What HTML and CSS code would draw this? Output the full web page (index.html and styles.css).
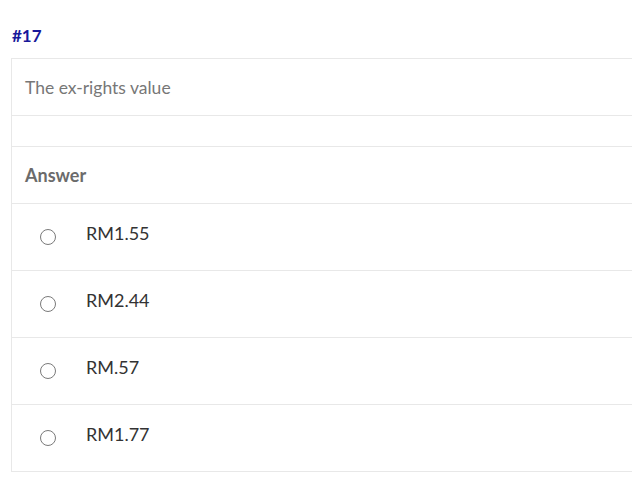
FILE: index.html
```html
<!DOCTYPE html>
<html>
<head>
<meta charset="utf-8">
<link rel="stylesheet" href="styles.css">
</head>
<body>
<div class="page">
  <div class="qnum">#17</div>
  <div class="card">
    <div class="row question">The ex-rights value</div>
    <div class="row spacer"></div>
    <div class="row head">Answer</div>
    <div class="row option"><span class="radio"></span><span class="label">RM1.55</span></div>
    <div class="row option"><span class="radio"></span><span class="label">RM2.44</span></div>
    <div class="row option"><span class="radio"></span><span class="label">RM.57</span></div>
    <div class="row option"><span class="radio"></span><span class="label">RM1.77</span></div>
  </div>
</div>
</body>
</html>
```
FILE: styles.css
```css
html, body {
  margin: 0;
  padding: 0;
  background: #fff;
  overflow: hidden;
}
.page {
  font-family: Lato, "Noto Sans", sans-serif;
  padding: 26px 0 0 11px;
  overflow: hidden;
}
.qnum {
  font-weight: 700;
  font-size: 17px;
  color: #18189a;
  padding-left: 1px;
  height: 32px;
  line-height: 20px;
}
.card {
  width: 700px;
  border: 1px solid #e8e8e8;
  border-right: none;
  border-bottom: none;
}
.row {
  border-bottom: 1px solid #e8e8e8;
  box-sizing: border-box;
}
.question {
  height: 57px;
  padding-left: 13px;
  display: flex;
  align-items: center;
  font-size: 17.5px;
  color: #777;
}
.spacer {
  height: 31px;
}
.head {
  height: 57px;
  padding-left: 13px;
  display: flex;
  align-items: center;
  font-size: 18px;
  font-weight: 700;
  color: #6b6b6b;
}
.option {
  height: 67px;
  display: flex;
  align-items: center;
  font-size: 18px;
  color: #333;
}
.radio {
  width: 14px;
  height: 14px;
  border: 1px solid #7a7a7a;
  border-radius: 50%;
  margin-left: 28px;
  margin-top: -1px;
}
.label {
  margin-left: 30px;
  margin-top: -9px;
}
```
